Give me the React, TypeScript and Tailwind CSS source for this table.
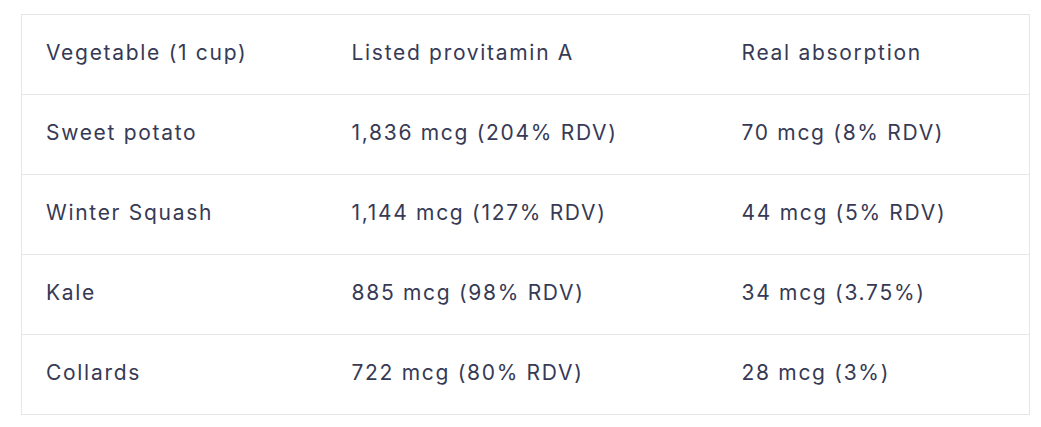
const rows = [
  ["Vegetable (1 cup)", "Listed provitamin A", "Real absorption"],
  ["Sweet potato", "1,836 mcg (204% RDV)", "70 mcg (8% RDV)"],
  ["Winter Squash", "1,144 mcg (127% RDV)", "44 mcg (5% RDV)"],
  ["Kale", "885 mcg (98% RDV)", "34 mcg (3.75%)"],
  ["Collards", "722 mcg (80% RDV)", "28 mcg (3%)"],
];

export default function App() {
  return (
    <div className="bg-white w-[1041px] h-[427px] pt-[14px] pl-[21px]" style={{ fontFamily: "Inter, 'Noto Sans', sans-serif" }}>
      <table className="w-[1009px] border-collapse border border-[#e6e6e6] text-[21px] tracking-[1.7px] text-[#363a55]">
        <tbody>
          {rows.map((r, i) => (
            <tr key={i} className="h-[80px] border-b border-[#e6e6e6]">
              <td className="w-[306px] pl-6 pb-1 align-middle">{r[0]}</td>
              <td className="w-[390px] pl-6 pb-1 align-middle">{r[1]}</td>
              <td className="pl-6 pb-1 align-middle">{r[2]}</td>
            </tr>
          ))}
        </tbody>
      </table>
    </div>
  );
}
